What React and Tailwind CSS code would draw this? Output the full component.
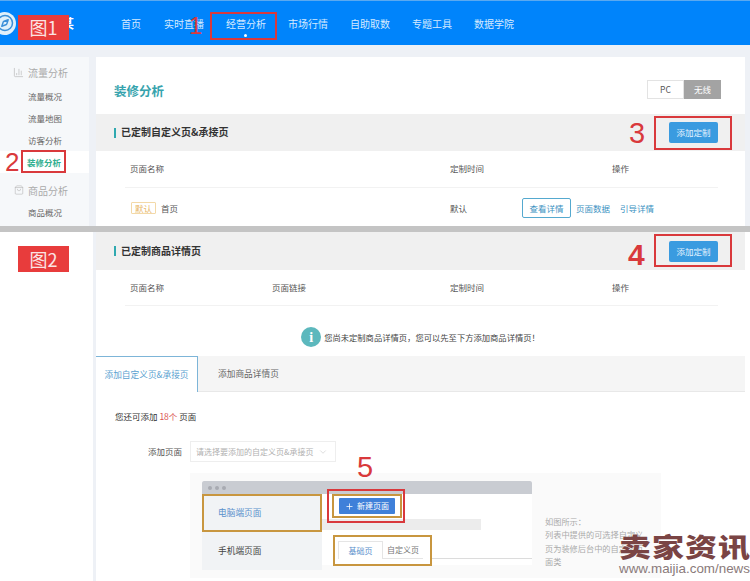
import { ChevronDown, Plus, Compass, ChartColumn, ShoppingBag } from 'lucide-react'

const navItems = ['首页', '实时直播', '经营分析', '市场行情', '自助取数', '专题工具', '数据学院']

const font = "font-['Noto_Sans_CJK_SC','Liberation_Sans',sans-serif]"

function AddButton() {
  return (
    <button className="w-[49px] h-[21px] rounded-[2px] bg-[#3a9be0] text-[#e6f4ff] text-[8.5px] leading-[21px] text-center">
      添加定制
    </button>
  )
}

function RedBox({ className }) {
  return <div className={`absolute border-[2px] border-[#d9393c] ${className}`} />
}

function RedLabel({ className, children }) {
  return <div className={`absolute text-[#d9393c] font-['Liberation_Sans',sans-serif] ${className}`}>{children}</div>
}

export default function App() {
  return (
    <div className={`relative w-[750px] h-[581px] overflow-hidden bg-white ${font}`}>
      {/* 图1 */}
      <div className="h-[226px] bg-[#eef1f6] overflow-hidden">
        <header className="h-[45px] bg-[#0084fb] border-t border-[#5aa9f0] flex items-center">
          <div className="w-[121px] flex items-center shrink-0 -ml-[7px]">
            <div className="w-[23px] h-[23px] rounded-full bg-[#dff0fb] flex items-center justify-center">
              <Compass className="w-[18px] h-[18px] text-[#3a8fd8]" strokeWidth={2} />
            </div>
            <span className="ml-[45px] text-white text-[13px] font-bold">某</span>
          </div>
          <nav className="flex items-center gap-[22px] text-[10px] text-[#d5eaff] mt-[1px] ml-[7px]">
            {navItems.map((item) => (
              <span key={item} className="relative w-[40px] text-center whitespace-nowrap first:w-[20px] first:mr-[1px]">
                {item}
                {item === '经营分析' && (
                  <span className="absolute left-[18px] top-[18px] w-[3px] h-[3px] rounded-full bg-white" />
                )}
              </span>
            ))}
          </nav>
        </header>

        <div className="flex pt-[12px] pr-[5px]">
          <aside className="w-[89px] h-[170px] mr-[7px] bg-[#f6f8fa] shrink-0 text-[8.5px] text-[#666]">
            <div className="h-[28px] pt-[3px] flex items-center pl-[13px] text-[#aaa] text-[10px]">
              <ChartColumn className="w-[11px] h-[11px] mr-[4px]" strokeWidth={1.2} />
              流量分析
            </div>
            <div className="h-[22px] leading-[22px] pl-[28px]">流量概况</div>
            <div className="h-[22px] leading-[22px] pl-[28px]">流量地图</div>
            <div className="h-[22px] leading-[22px] pl-[28px]">访客分析</div>
            <div className="h-[22px] leading-[22px] pl-[27px] bg-white text-[#2fae8e] font-bold">装修分析</div>
            <div className="h-[28px] mt-[3px] flex items-center pl-[14px] text-[#aaa] text-[10px]">
              <ShoppingBag className="w-[10px] h-[10px] mr-[4px]" strokeWidth={1.2} />
              商品分析
            </div>
            <div className="h-[16px] leading-[16px] pl-[28px]">商品概况</div>
          </aside>

          <main className="flex-1 bg-white">
            <div className="h-[57px] pt-[8px] flex items-center justify-between pl-[18px] pr-[24px]">
              <h1 className="mt-[3px] text-[12.5px] font-bold text-[#36a3ad]">装修分析</h1>
              <div className="flex h-[19px] text-[8.5px] leading-[19px] text-center">
                <span className="w-[37px] border border-[#e3e3e3] text-[#555] leading-[17px]">PC</span>
                <span className="w-[37px] bg-[#a3a3a3] text-white">无线</span>
              </div>
            </div>
            <div className="h-[37px] bg-[#f0f0f0] flex items-center justify-between pl-[18px] pr-[27px]">
              <div className="flex items-center">
                <span className="w-[2px] h-[10px] bg-[#2fa9b0] mr-[5px]" />
                <span className="-mt-[2px] text-[10px] font-bold text-[#333]">已定制自定义页&amp;承接页</span>
              </div>
              <AddButton />
            </div>
            <div className="ml-[29px] mr-[27px] h-[37px] pb-[2px] border-b border-[#f2f2f2] flex items-center text-[8.5px] text-[#555]">
              <span className="w-[325px] pl-[5px]">页面名称</span>
              <span className="w-[162px]">定制时间</span>
              <span>操作</span>
            </div>
            <div className="ml-[29px] mr-[27px] h-[38px] pt-[2px] flex items-center text-[8.5px] text-[#555]">
              <span className="w-[325px] pl-[6px] flex items-center">
                <span className="w-[25px] h-[12px] mr-[5px] border border-[#f3d9a8] rounded-[1px] text-[#e8b769] text-[8.5px] leading-[10px] text-center">默认</span>
                首页
              </span>
              <span className="w-[72px]">默认</span>
              <span className="flex items-center text-[#3b92c2]">
                <span className="w-[49px] h-[20px] mr-[5px] border border-[#55a9cf] rounded-[2px] leading-[18px] text-center">查看详情</span>
                <span className="mr-[10px]">页面数据</span>
                <span>引导详情</span>
              </span>
            </div>
          </main>
        </div>
      </div>

      <div className="h-[6px] bg-[#c4c4c4]" />

      {/* 图2 */}
      <div className="flex h-[349px]">
        <aside className="w-[93px] shrink-0 bg-white border-r-[3px] border-[#eef1f6] box-content" />
        <main className="flex-1 pr-[5px] min-w-0">
          <div className="h-[38px] bg-[#f0f0f0] flex items-center justify-between pl-[18px] pr-[27px]">
            <div className="flex items-center">
              <span className="w-[2px] h-[10px] bg-[#2fa9b0] mr-[5px]" />
              <span className="-mt-[2px] text-[10px] font-bold text-[#333]">已定制商品详情页</span>
            </div>
            <AddButton />
          </div>
          <div className="ml-[29px] mr-[27px] h-[36px] pb-[1px] border-b border-[#f2f2f2] flex items-center text-[8.5px] text-[#555]">
            <span className="w-[147px] pl-[5px]">页面名称</span>
            <span className="w-[178px]">页面链接</span>
            <span className="w-[162px]">定制时间</span>
            <span>操作</span>
          </div>
          <div className="h-[50px] pt-[12px] flex items-center justify-center text-[8.3px] text-[#444]">
            <span className="w-[20px] h-[20px] mr-[3px] rounded-full bg-[#5cb8bd] flex items-center justify-center text-white text-[14px] font-bold font-['Liberation_Serif',serif]">i</span>
            您尚未定制商品详情页，您可以先至下方添加商品详情页！
          </div>
          <div className="h-[36px] bg-[#f5f5f5] border-b border-[#e8e8e8] flex text-[8.7px]">
            <span className="w-[102px] h-[36px] bg-white border-t border-r border-[#7db5d8] text-[#5a9fd0] leading-[35px] text-center whitespace-nowrap">添加自定义页&amp;承接页</span>
            <span className="ml-[20px] text-[#666] leading-[35px]">添加商品详情页</span>
          </div>

          <div className="pl-[19px] pt-[17px] text-[8.5px] text-[#333]">
            <p className="leading-[14px]">
              您还可添加 <span className="text-[#d9534f]">18个</span> 页面
            </p>
            <div className="mt-[18px] flex items-center">
              <span className="w-[75px] pl-[33px] text-[#555] whitespace-nowrap">添加页面</span>
              <div className="w-[146px] h-[21px] border border-[#eee] flex items-center justify-between pl-[5px] pr-[7px] text-[8px] text-[#b0b0b0] whitespace-nowrap">
                请选择要添加的自定义页&amp;承接页
                <ChevronDown className="w-[10px] h-[10px] shrink-0" strokeWidth={1} />
              </div>
            </div>

            <div className="ml-[75px] mt-[11px] w-[471px] h-[105px] bg-[#fafafa] pl-[12px] pt-[8px] flex">
              <div className="w-[330px] h-[84px] bg-white shrink-0">
                <div className="h-[13px] bg-[#c9ccd2] rounded-t-[2px] flex items-center gap-[3px] pl-[6px]">
                  <span className="w-[4px] h-[4px] rounded-full bg-[#a8abb2]" />
                  <span className="w-[4px] h-[4px] rounded-full bg-[#a8abb2]" />
                  <span className="w-[4px] h-[4px] rounded-full bg-[#a8abb2]" />
                </div>
                <div className="flex">
                  <div className="w-[120px] shrink-0 bg-[#f1f3f5] text-[8.7px]">
                    <div className="h-[38px] border-2 border-[#c8963f] text-[#5a90cc] flex items-center pl-[14px]">电脑端页面</div>
                    <div className="h-[38px] text-[#444] flex items-center pl-[16px]">手机端页面</div>
                  </div>
                  <div className="flex-1 min-w-0">
                    <div className="w-[70px] h-[24px] ml-[10px] border-2 border-[#c8963f] flex items-center justify-center">
                      <span className="w-[56px] h-[16px] rounded-[1px] bg-[#3f80d9] text-white text-[8px] flex items-center justify-center whitespace-nowrap">
                        <Plus className="w-[9px] h-[9px] mr-[3px]" strokeWidth={2} />
                        新建页面
                      </span>
                    </div>
                    <div className="h-[11px] mt-[1px] mr-[51px] bg-[#ececec]" />
                    <div className="flex mt-[5px] ml-[11px]">
                      <div className="w-[99px] h-[31px] shrink-0 border-2 border-[#c8963f] flex items-start pt-[4px] pl-[3px] text-[8px] text-center leading-[17px]">
                        <span className="w-[45px] h-[18px] border-x border-t border-[#e5e5e5] text-[#5a90cc]">基础页</span>
                        <span className="w-[40px] h-[18px] border-b border-[#e5e5e5] text-[#777]">自定义页</span>
                      </div>
                      <span className="flex-1 h-[24px] border-b border-[#dcdcdc]" />
                    </div>
                  </div>
                </div>
              </div>
              <div className="ml-[13px] pt-[34px] text-[8.2px] leading-[13.3px] text-[#aaa] w-[110px]">
                <p>如图所示：</p>
                <p className="whitespace-nowrap">列表中提供的可选择自定义</p>
                <p className="whitespace-nowrap">页为装修后台中的自定义页</p>
                <p>面类</p>
              </div>
            </div>
          </div>
        </main>
      </div>

      {/* 标注 */}
      <div className="absolute left-[18px] top-[15px] w-[51px] h-[25px] bg-[#e83c3c] text-[#fbe3e3] text-[18px] leading-[25px] text-center">图1</div>
      <div className="absolute left-[18px] top-[246px] w-[51px] h-[26px] bg-[#e83c3c] text-[#fbe3e3] text-[18px] leading-[26px] text-center">图2</div>
      <RedLabel className="left-[189px] top-[12px] text-[24px] leading-[28px]">1</RedLabel>
      <RedBox className="left-[210px] top-[12px] w-[67px] h-[28px]" />
      <RedLabel className="left-[5px] top-[147px] text-[26px] leading-[30px]">2</RedLabel>
      <RedBox className="left-[21px] top-[150px] w-[45px] h-[23px]" />
      <RedLabel className="left-[629px] top-[117px] text-[29px] leading-[32px]">3</RedLabel>
      <RedBox className="left-[654px] top-[116px] w-[78px] h-[34px]" />
      <RedLabel className="left-[628px] top-[238px] text-[30px] leading-[34px] font-bold">4</RedLabel>
      <RedBox className="left-[654px] top-[234px] w-[78px] h-[33px]" />
      <RedLabel className="left-[357px] top-[450px] text-[29px] leading-[34px]">5</RedLabel>
      <RedBox className="left-[327px] top-[489px] w-[78px] h-[34px] border-[#d92b3f]" />

      {/* 水印 */}
      <div className="absolute left-[619px] top-[533px] w-[131px] text-[#7a4444]">
        <div className="h-[29px] text-[32px] leading-[32px] font-black whitespace-nowrap tracking-[1px] origin-top scale-y-[0.8]">卖家资讯</div>
        <div className="text-[13.4px] leading-[14px] text-[#8a7a7a] font-['Liberation_Sans',sans-serif] whitespace-nowrap">www.maijia.com/news</div>
      </div>
    </div>
  )
}
